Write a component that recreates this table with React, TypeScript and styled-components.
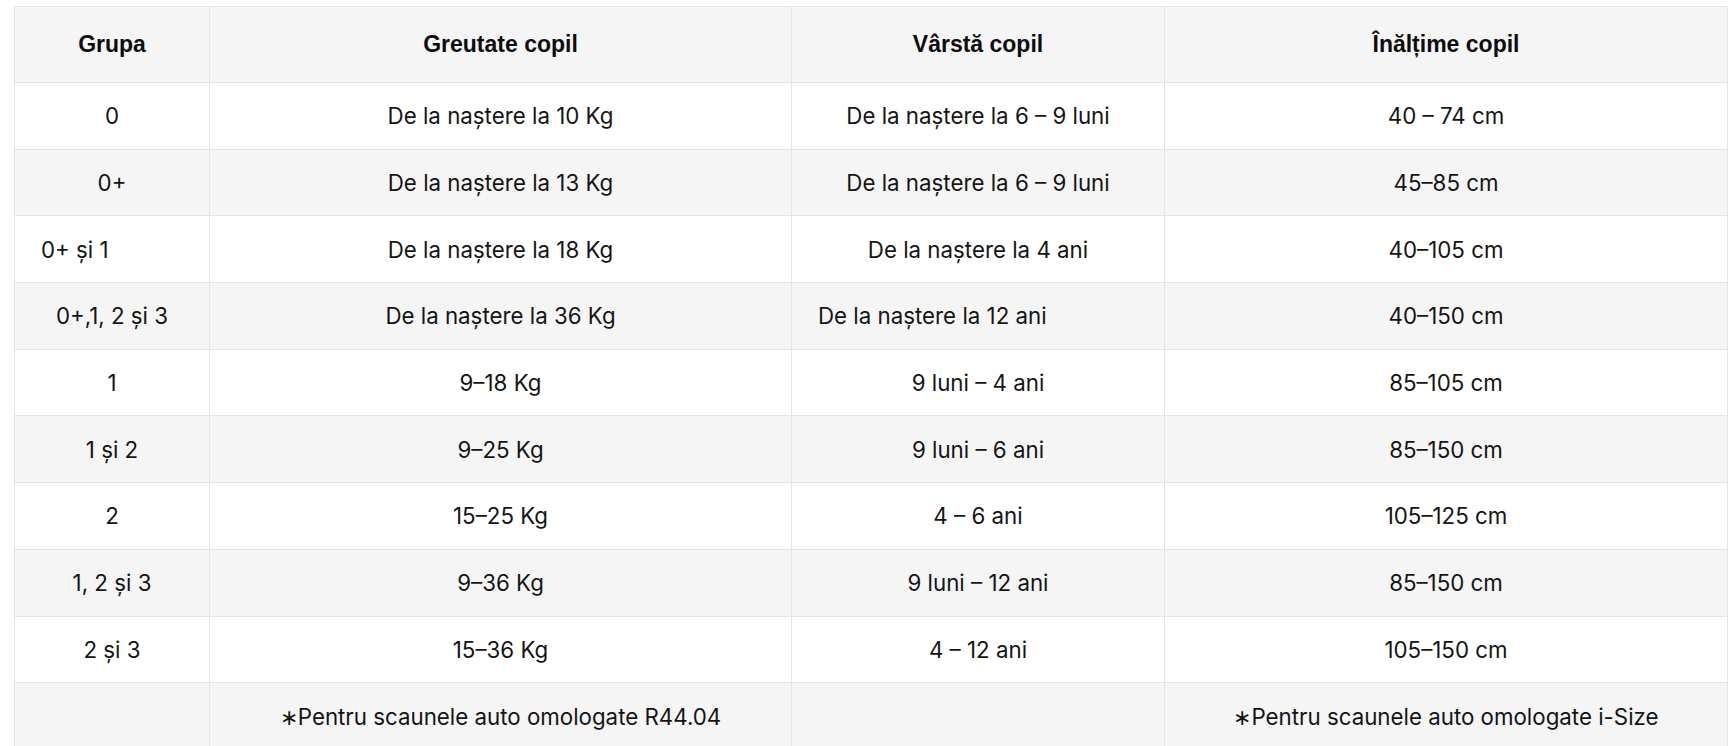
import React from 'react';
import styled, { createGlobalStyle } from 'styled-components';

const GlobalStyle = createGlobalStyle`
  html, body {
    margin: 0;
    padding: 0;
    background: #ffffff;
  }
`;

const Page = styled.div`
  padding: 6px 9px 0 14px;
`;

const Table = styled.table`
  width: 1713px;
  border-collapse: collapse;
  table-layout: fixed;
  font-family: Inter, 'Noto Sans', sans-serif;
  color: #141414;
`;

const HeadCell = styled.th`
  height: 75px;
  padding: 0 12px;
  background: #f5f5f5;
  border: 1px solid #e4e4e4;
  font-family: 'Liberation Sans', Arial, sans-serif;
  font-weight: 700;
  font-size: 23px;
  text-align: center;
  color: #0d0d0d;
`;

const Row = styled.tr<{ $shade: boolean }>`
  background: ${(p) => (p.$shade ? '#f5f5f5' : '#ffffff')};
`;

const Cell = styled.td<{ $left?: boolean }>`
  height: 65.7px;
  padding: 0 26px;
  border: 1px solid #e4e4e4;
  font-size: 22.3px;
  text-align: ${(p) => (p.$left ? 'left' : 'center')};
  white-space: nowrap;
`;

type Value = string | { text: string; left: true };

const rows: Value[][] = [
  ['0', 'De la naștere la 10 Kg', 'De la naștere la 6 – 9 luni', '40 – 74 cm'],
  ['0+', 'De la naștere la 13 Kg', 'De la naștere la 6 – 9 luni', '45–85 cm'],
  [{ text: '0+ și 1', left: true }, 'De la naștere la 18 Kg', 'De la naștere la 4 ani', '40–105 cm'],
  ['0+,1, 2 și 3', 'De la naștere la 36 Kg', { text: 'De la naștere la 12 ani', left: true }, '40–150 cm'],
  ['1', '9–18 Kg', '9 luni – 4 ani', '85–105 cm'],
  ['1 și 2', '9–25 Kg', '9 luni – 6 ani', '85–150 cm'],
  ['2', '15–25 Kg', '4 – 6 ani', '105–125 cm'],
  ['1, 2 și 3', '9–36 Kg', '9 luni – 12 ani', '85–150 cm'],
  ['2 și 3', '15–36 Kg', '4 – 12 ani', '105–150 cm'],
  ['', '∗Pentru scaunele auto omologate R44.04', '', '∗Pentru scaunele auto omologate i-Size'],
];

const headers = ['Grupa', 'Greutate copil', 'Vârstă copil', 'Înălțime copil'];
const widths = [195, 582, 373, 563];

export default function App() {
  return (
    <>
      <GlobalStyle />
      <Page>
        <Table>
          <colgroup>
            {widths.map((w, i) => (
              <col key={i} style={{ width: w }} />
            ))}
          </colgroup>
          <thead>
            <tr>
              {headers.map((h) => (
                <HeadCell key={h}>{h}</HeadCell>
              ))}
            </tr>
          </thead>
          <tbody>
            {rows.map((row, i) => (
              <Row key={i} $shade={i % 2 === 1}>
                {row.map((v, j) =>
                  typeof v === 'string' ? (
                    <Cell key={j}>{v}</Cell>
                  ) : (
                    <Cell key={j} $left>
                      {v.text}
                    </Cell>
                  ),
                )}
              </Row>
            ))}
          </tbody>
        </Table>
      </Page>
    </>
  );
}
